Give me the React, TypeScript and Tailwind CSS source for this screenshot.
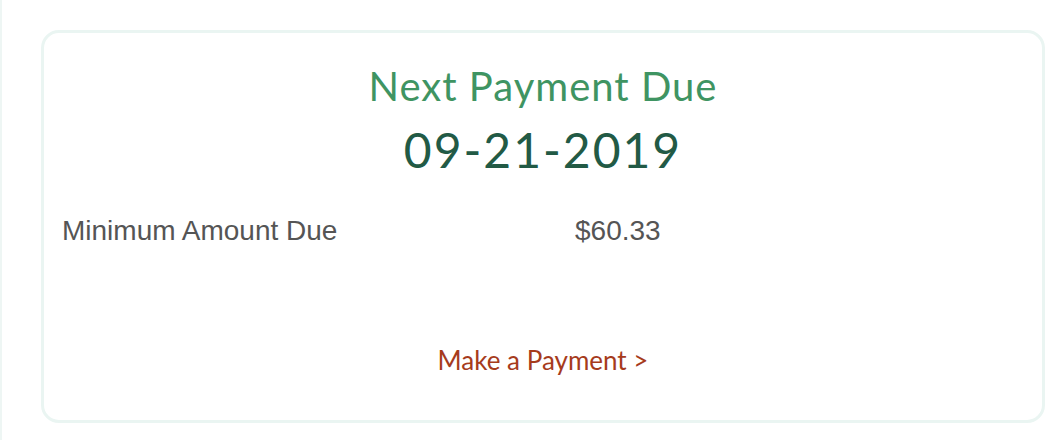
export default function App() {
  return (
    <div className="w-[1058px] h-[440px] bg-white flex overflow-hidden">
      {/* edge of the neighbouring card */}
      <div className="w-[2px] shrink-0 bg-[#eef6f4]" />

      <div className="flex-1 pl-[39px] pr-[13px] pt-[30px] pb-[17px] flex">
        <section className="flex-1 border-[3px] border-[#eaf5f2] rounded-[18px] flex flex-col">
          <h2
            className="mt-[30px] text-center text-[40px] leading-[46px] tracking-[1px] text-[#3f9462]"
            style={{ fontFamily: 'Lato, "Open Sans", sans-serif' }}
          >
            Next Payment Due
          </h2>
          <div
            className="mt-[14px] text-center text-[48px] leading-[54px] tracking-[2px] text-[#225a45]"
            style={{ fontFamily: 'Lato, "Open Sans", sans-serif' }}
          >
            09-21-2019
          </div>

          <div
            className="mt-[38px] grid grid-cols-[513px_1fr] pl-[18px] text-[28px] leading-[32px] text-[#555555]"
            style={{ fontFamily: '"Liberation Sans", Arial, sans-serif' }}
          >
            <span>Minimum Amount Due</span>
            <span>$60.33</span>
          </div>

          <div className="flex-1 flex items-end justify-center pb-[44px]">
            <a
              href="#"
              className="text-[26px] leading-[32px] text-[#a63b1c]"
              style={{ fontFamily: 'Lato, "Open Sans", sans-serif' }}
            >
              Make a Payment &gt;
            </a>
          </div>
        </section>
      </div>
    </div>
  );
}
